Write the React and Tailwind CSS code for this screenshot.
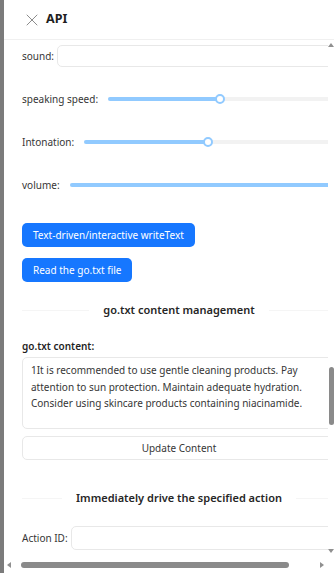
import { X } from 'lucide-react'

const font = { fontFamily: "'Noto Sans', 'Noto Sans CJK SC', sans-serif" }

function Slider({ value }) {
  return (
    <div className="relative flex-1 h-[10px] mx-[5px] flex items-center">
      <div className="h-[4px] w-full rounded-full bg-[#f2f2f2] flex">
        <div className="h-full rounded-full bg-[#91caff]" style={{ width: value + '%' }} />
      </div>
      {value < 100 && (
        <div
          className="absolute top-0 w-[10px] h-[10px] rounded-full bg-white border-2 border-[#91caff]"
          style={{ left: `calc(${value}% - 5px)` }}
        />
      )}
    </div>
  )
}

function Divider({ children }) {
  return (
    <div className="flex items-center gap-[14px] h-[16px]">
      <div className="flex-1 h-px bg-[#f5f5f5]" />
      <span className="text-[11px] font-semibold text-[#262626]">{children}</span>
      <div className="flex-1 h-px bg-[#f5f5f5]" />
    </div>
  )
}

export default function App() {
  return (
    <div className="flex w-[334px] h-[573px] bg-white text-[#363636]" style={font}>
      <div className="w-[4px] bg-[#7b7b7b]" />
      <div className="flex-1 flex flex-col min-w-0">
        {/* Header */}
        <div className="h-[40px] flex items-center gap-[4px] pl-[18px] border-b border-[#f0f0f0]">
          <X size={20} strokeWidth={1.2} className="text-[#8c8c8c]" />
          <span className="text-[12.5px] font-bold text-[#1f1f1f]">API</span>
        </div>

        <div className="flex-1 flex min-h-0">
          {/* Scrolled content */}
          <div className="flex-1 overflow-hidden">
            <div className="w-[314px] ml-[18px] pt-[5px] text-[10px]">
              <div className="flex items-center h-[22px]">
                <span className="mr-[3px]">sound:</span>
                <div className="flex-1 h-[22px] rounded-[5px] border border-[#e8e8e8]" />
              </div>
              <div className="flex items-center h-[22px] mt-[21px]">
                <span className="mr-[5px]">speaking speed:</span>
                <Slider value={50} />
              </div>
              <div className="flex items-center h-[22px] mt-[21px]">
                <span className="mr-[5px]">Intonation:</span>
                <Slider value={50} />
              </div>
              <div className="flex items-center h-[22px] mt-[21px]">
                <span className="mr-[5px]">volume:</span>
                <Slider value={100} />
              </div>

              <div className="flex flex-col items-start gap-[11px] mt-[27px]">
                <button className="h-[24px] px-[11px] rounded-[5px] bg-[#1677ff] text-white text-[10px]">
                  Text-driven/interactive writeText
                </button>
                <button className="h-[24px] px-[11px] rounded-[5px] bg-[#1677ff] text-white text-[10px]">
                  Read the go.txt file
                </button>
              </div>

              <div className="mt-[20px]">
                <Divider>go.txt content management</Divider>
              </div>

              <div className="mt-[21px] h-[14px] leading-[14px] font-semibold text-[10px] text-[#1f1f1f]">go.txt content:</div>
              <div className="mt-[4px] h-[72px] rounded-[5px] border border-[#e8e8e8] px-[8px] py-[4px] text-[10px] leading-[16.5px] text-[#363636]">
                1It is recommended to use gentle cleaning products. Pay attention to sun protection. Maintain adequate hydration. Consider using skincare products containing niacinamide.
              </div>
              <button className="mt-[7px] w-full h-[24px] rounded-[5px] border border-[#e8e8e8] text-[10px] text-[#363636]">
                Update Content
              </button>

              <div className="mt-[30px]">
                <Divider>Immediately drive the specified action</Divider>
              </div>

              <div className="flex items-center h-[24px] mt-[20px]">
                <span className="mr-[3px]">Action ID:</span>
                <div className="flex-1 h-[24px] rounded-[5px] border border-[#e8e8e8]" />
              </div>
            </div>
          </div>

          {/* Vertical scrollbar */}
          <div className="w-[6px] flex flex-col items-center pt-[3px] pb-[4px]">
            <div className="w-0 h-0 border-l-[3px] border-r-[3px] border-b-[4px] border-l-transparent border-r-transparent border-b-[#909090]" />
            <div className="flex-1 flex flex-col pt-[320px] w-full">
              <div className="h-[58px] w-[5px] ml-[1px] rounded-full bg-[#8a8a8a]" />
            </div>
            <div className="w-0 h-0 border-l-[3px] border-r-[3px] border-t-[4px] border-l-transparent border-r-transparent border-t-[#909090]" />
          </div>
        </div>

        {/* Horizontal scrollbar */}
        <div className="h-[16px] flex items-center pl-[3px] pr-[10px]">
          <div className="w-0 h-0 border-t-[3px] border-b-[3px] border-r-[4px] border-t-transparent border-b-transparent border-r-[#909090]" />
          <div className="ml-[10px] w-[268px] h-[6px] rounded-full bg-[#8a8a8a]" />
          <div className="flex-1" />
          <div className="w-0 h-0 border-t-[3px] border-b-[3px] border-l-[4px] border-t-transparent border-b-transparent border-l-[#909090]" />
        </div>
      </div>
    </div>
  )
}
